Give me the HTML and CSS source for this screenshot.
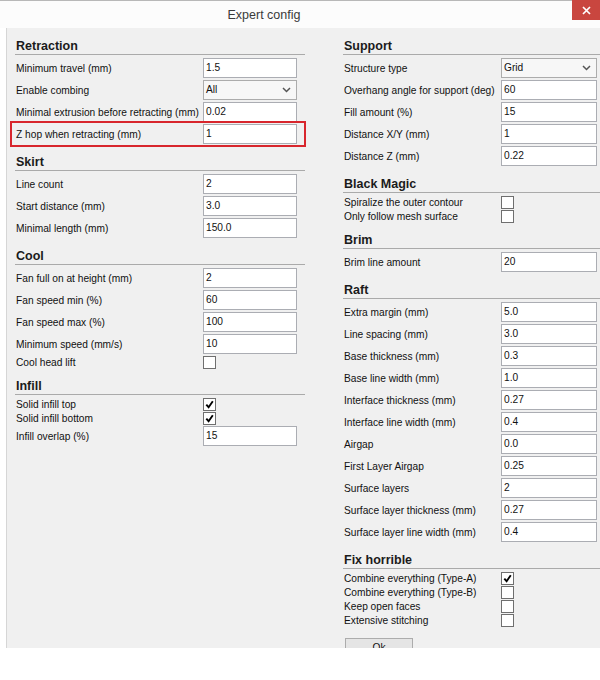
FILE: index.html
```html
<!DOCTYPE html>
<html>
<head>
<meta charset="utf-8">
<title>Expert config</title>
<link rel="stylesheet" href="styles.css">
</head>
<body>
<div class="window">
  <div class="titlebar">
    <div class="title">Expert config</div>
    <div class="close"><svg width="9" height="9" viewBox="0 0 9 9"><path d="M1 1L8 8M8 1L1 8" stroke="#fff" stroke-width="1.7" fill="none"/></svg></div>
  </div>
  <div class="panel">
    <div class="col col-left">
      <section class="group">
        <h2 class="group-title">Retraction</h2>
        <div class="row"><span class="label">Minimum travel (mm)</span><span class="box">1.5</span></div>
        <div class="row"><span class="label">Enable combing</span><span class="box select">All<svg width="9" height="6" viewBox="0 0 9 6"><path d="M1 1L4.5 4.5L8 1" stroke="#555" stroke-width="1.5" fill="none"/></svg></span></div>
        <div class="row"><span class="label">Minimal extrusion before retracting (mm)</span><span class="box">0.02</span></div>
        <div class="row highlight"><span class="label">Z hop when retracting (mm)</span><span class="box">1</span></div>
      </section>
      <section class="group">
        <h2 class="group-title">Skirt</h2>
        <div class="row"><span class="label">Line count</span><span class="box">2</span></div>
        <div class="row"><span class="label">Start distance (mm)</span><span class="box">3.0</span></div>
        <div class="row"><span class="label">Minimal length (mm)</span><span class="box">150.0</span></div>
      </section>
      <section class="group">
        <h2 class="group-title">Cool</h2>
        <div class="row"><span class="label">Fan full on at height (mm)</span><span class="box">2</span></div>
        <div class="row"><span class="label">Fan speed min (%)</span><span class="box">60</span></div>
        <div class="row"><span class="label">Fan speed max (%)</span><span class="box">100</span></div>
        <div class="row"><span class="label">Minimum speed (mm/s)</span><span class="box">10</span></div>
        <div class="row check-row"><span class="label">Cool head lift</span><span class="check"></span></div>
      </section>
      <section class="group">
        <h2 class="group-title">Infill</h2>
        <div class="row check-row"><span class="label">Solid infill top</span><span class="check"><svg width="9" height="9" viewBox="0 0 9 9"><path d="M1.3 4.6L3.6 7.2L7.8 1.3" stroke="#000" stroke-width="1.9" fill="none"/></svg></span></div>
        <div class="row check-row"><span class="label">Solid infill bottom</span><span class="check"><svg width="9" height="9" viewBox="0 0 9 9"><path d="M1.3 4.6L3.6 7.2L7.8 1.3" stroke="#000" stroke-width="1.9" fill="none"/></svg></span></div>
        <div class="row"><span class="label">Infill overlap (%)</span><span class="box">15</span></div>
      </section>
    </div>
    <div class="col col-right">
      <section class="group">
        <h2 class="group-title">Support</h2>
        <div class="row"><span class="label">Structure type</span><span class="box select">Grid<svg width="9" height="6" viewBox="0 0 9 6"><path d="M1 1L4.5 4.5L8 1" stroke="#555" stroke-width="1.5" fill="none"/></svg></span></div>
        <div class="row"><span class="label">Overhang angle for support (deg)</span><span class="box">60</span></div>
        <div class="row"><span class="label">Fill amount (%)</span><span class="box">15</span></div>
        <div class="row"><span class="label">Distance X/Y (mm)</span><span class="box">1</span></div>
        <div class="row"><span class="label">Distance Z (mm)</span><span class="box">0.22</span></div>
      </section>
      <section class="group">
        <h2 class="group-title">Black Magic</h2>
        <div class="row check-row"><span class="label">Spiralize the outer contour</span><span class="check"></span></div>
        <div class="row check-row"><span class="label">Only follow mesh surface</span><span class="check"></span></div>
      </section>
      <section class="group">
        <h2 class="group-title">Brim</h2>
        <div class="row"><span class="label">Brim line amount</span><span class="box">20</span></div>
      </section>
      <section class="group">
        <h2 class="group-title">Raft</h2>
        <div class="row"><span class="label">Extra margin (mm)</span><span class="box">5.0</span></div>
        <div class="row"><span class="label">Line spacing (mm)</span><span class="box">3.0</span></div>
        <div class="row"><span class="label">Base thickness (mm)</span><span class="box">0.3</span></div>
        <div class="row"><span class="label">Base line width (mm)</span><span class="box">1.0</span></div>
        <div class="row"><span class="label">Interface thickness (mm)</span><span class="box">0.27</span></div>
        <div class="row"><span class="label">Interface line width (mm)</span><span class="box">0.4</span></div>
        <div class="row"><span class="label">Airgap</span><span class="box">0.0</span></div>
        <div class="row"><span class="label">First Layer Airgap</span><span class="box">0.25</span></div>
        <div class="row"><span class="label">Surface layers</span><span class="box">2</span></div>
        <div class="row"><span class="label">Surface layer thickness (mm)</span><span class="box">0.27</span></div>
        <div class="row"><span class="label">Surface layer line width (mm)</span><span class="box">0.4</span></div>
      </section>
      <section class="group">
        <h2 class="group-title">Fix horrible</h2>
        <div class="row check-row"><span class="label">Combine everything (Type-A)</span><span class="check"><svg width="9" height="9" viewBox="0 0 9 9"><path d="M1.3 4.6L3.6 7.2L7.8 1.3" stroke="#000" stroke-width="1.9" fill="none"/></svg></span></div>
        <div class="row check-row"><span class="label">Combine everything (Type-B)</span><span class="check"></span></div>
        <div class="row check-row"><span class="label">Keep open faces</span><span class="check"></span></div>
        <div class="row check-row"><span class="label">Extensive stitching</span><span class="check"></span></div>
      </section>
      <div class="ok-button">Ok</div>
    </div>
  </div>
</div>
</body>
</html>
```
FILE: styles.css
```css
html, body {
  margin: 0;
  padding: 0;
  background: #ffffff;
}

body {
  width: 600px;
  height: 680px;
  overflow: hidden;
  font-family: "Liberation Sans", Arial, sans-serif;
  color: #000;
}

.window {
  width: 600px;
}

.titlebar {
  display: flex;
  height: 28px;
  border-top: 1px solid #b8b8b8;
  box-sizing: border-box;
  background: #fcfcfc;
}

.title {
  flex: 1;
  padding-right: 44px;
  text-align: center;
  font-size: 12.5px;
  line-height: 28px;
  color: #3a3a3a;
}

.close {
  width: 28px;
  height: 20px;
  margin-top: -1px;
  background: #c9463f;
  display: flex;
  align-items: center;
  justify-content: center;
}

.panel {
  margin-left: 6px;
  height: 620px;
  overflow: hidden;
  border-left: 1px solid #d6d6d6;
  background: #f0f0f0;
  display: grid;
  grid-template-columns: 296px 1fr;
  column-gap: 32px;
  align-items: start;
  padding: 10px 0 0 3px;
  box-sizing: border-box;
  font-size: 10.2px;
}

.col {
  display: flex;
  flex-direction: column;
}

.group + .group {
  margin-top: 9px;
}

.group-title {
  margin: 0 1px 2px 5px;
  padding-left: 1px;
  font-size: 12.5px;
  font-weight: bold;
  line-height: 16px;
  color: #1b1b1b;
  border-bottom: 1px solid #aaaaaa;
}

.col-right .group-title {
  margin-right: 0;
}

.row {
  display: flex;
  align-items: center;
  height: 22px;
  margin: 0 2px;
  padding-left: 4px;
}

.check-row {
  height: 14px;
}

.label {
  flex: none;
  width: 187px;
  white-space: nowrap;
  color: #111;
}

.col-right .label {
  width: 157px;
}

.box {
  flex: none;
  box-sizing: border-box;
  width: 94px;
  height: 20px;
  line-height: 18px;
  padding-left: 2px;
  background: #ffffff;
  border: 1px solid #abadb3;
  color: #111;
}

.col-right .box {
  width: 96px;
}

.select {
  display: flex;
  align-items: center;
  justify-content: space-between;
  padding-right: 5px;
  background: #f7f7f7;
  border-color: #acacac;
}

.highlight {
  outline: 2px solid #d8262d;
}

.check {
  flex: none;
  box-sizing: border-box;
  width: 13px;
  height: 13px;
  background: #ffffff;
  border: 1px solid #6f6f6f;
  display: flex;
  align-items: center;
  justify-content: center;
}

.ok-button {
  margin: 11px 0 0 7px;
  width: 68px;
  height: 22px;
  box-sizing: border-box;
  border: 1px solid #acacac;
  background: #e5e5e5;
  text-align: center;
  line-height: 18px;
  color: #111;
}
```
